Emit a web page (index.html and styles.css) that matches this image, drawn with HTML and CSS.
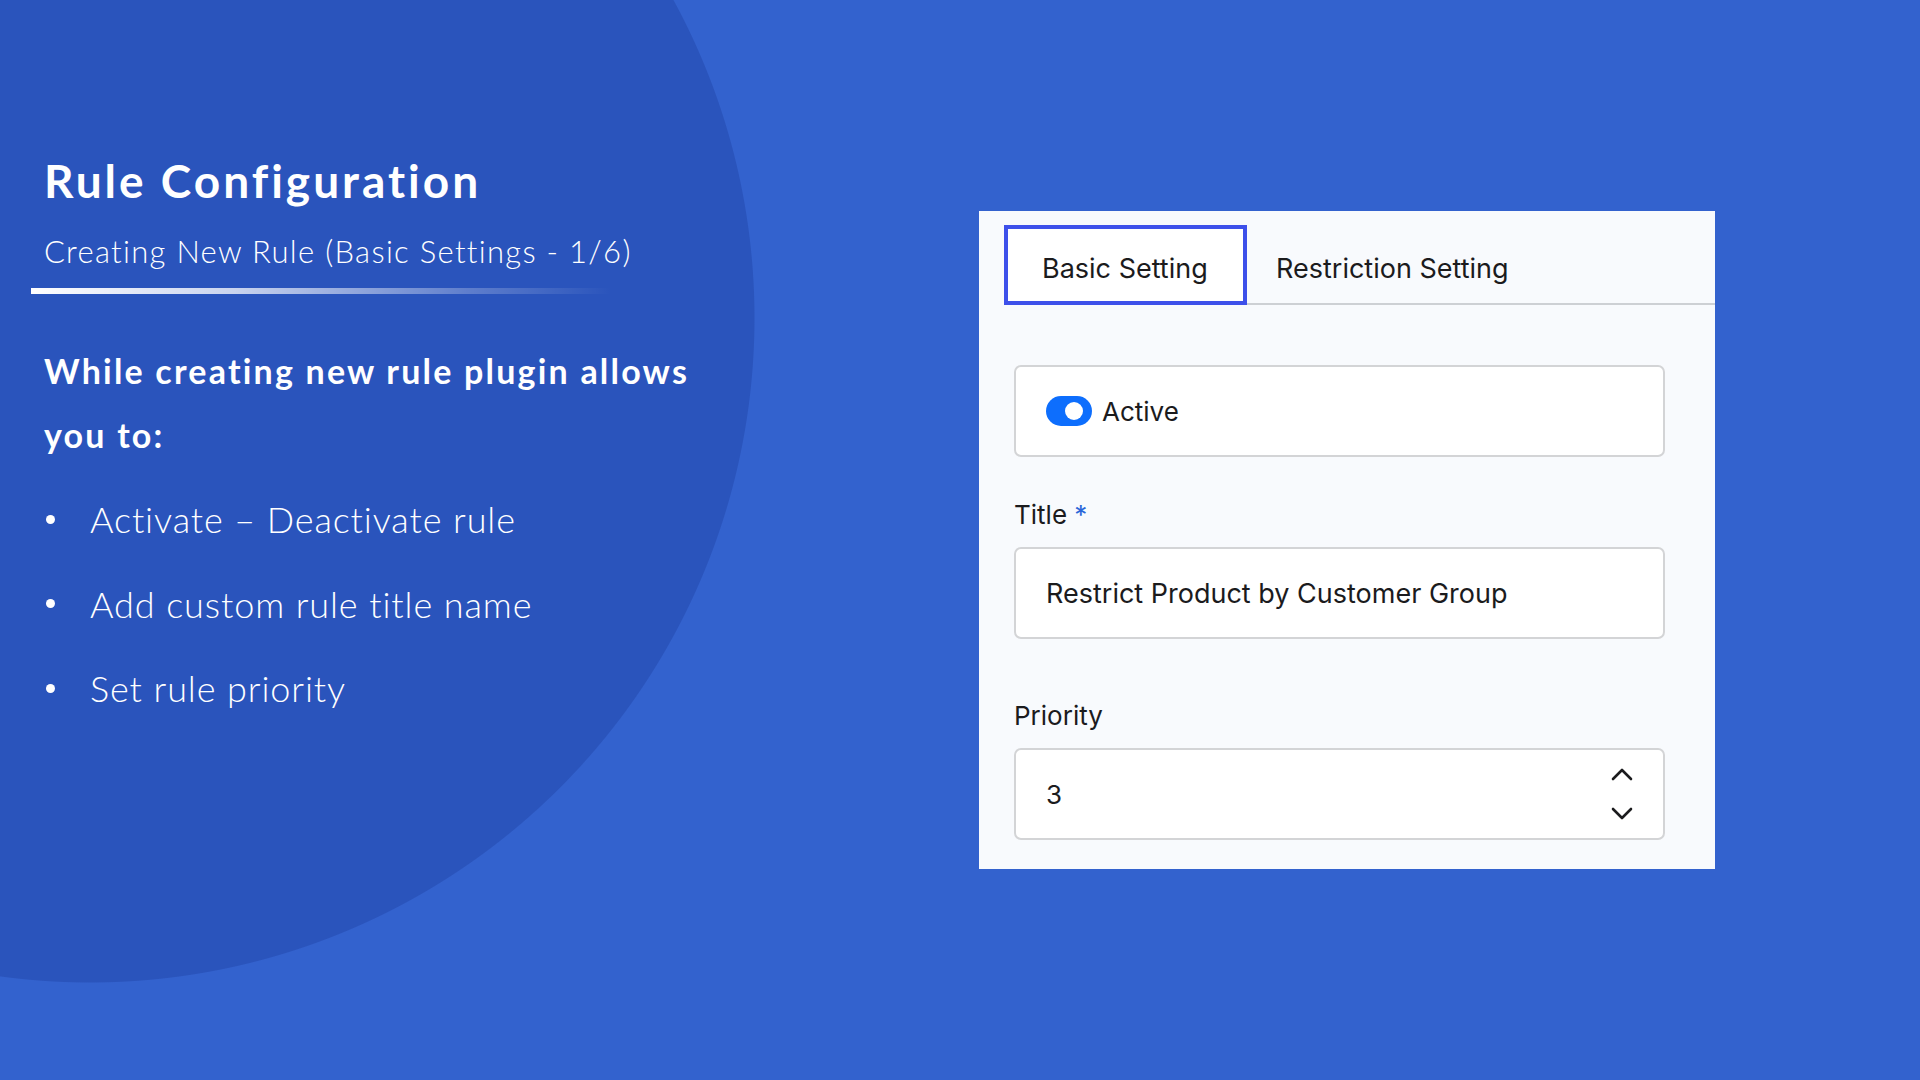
FILE: index.html
```html
<!DOCTYPE html>
<html lang="en">
<head>
<meta charset="utf-8">
<title>Rule Configuration</title>
<link rel="stylesheet" href="styles.css">
</head>
<body>
<main class="slide">
  <section class="intro">
    <h1 class="title">Rule Configuration</h1>
    <p class="subtitle">Creating New Rule (Basic Settings - 1/6)</p>
    <div class="rule-line"></div>
    <p class="lead">While creating new rule plugin allows you to:</p>
    <ul class="points">
      <li>Activate – Deactivate rule</li>
      <li>Add custom rule title name</li>
      <li>Set rule priority</li>
    </ul>
  </section>
  <section class="card">
    <div class="tabs">
      <div class="tab active">Basic Setting</div>
      <div class="tab">Restriction Setting</div>
    </div>
    <div class="form">
      <div class="field">
        <span class="switch"><span class="knob"></span></span>
        <span class="switch-label">Active</span>
      </div>
      <div class="label label-title">Title <span class="req">*</span></div>
      <div class="field field-text">Restrict Product by Customer Group</div>
      <div class="label label-priority">Priority</div>
      <div class="field number">
        <span>3</span>
        <svg class="spin" width="22" height="56" viewBox="0 0 22 56">
          <polyline points="2,13 11,4 20,13" />
          <polyline points="2,43 11,52 20,43" />
        </svg>
      </div>
    </div>
  </section>
</main>
</body>
</html>
```
FILE: styles.css
```css
html, body {
  margin: 0;
  padding: 0;
}
body {
  width: 1920px;
  height: 1080px;
  overflow: hidden;
  background: radial-gradient(circle 665px at 90px 318px, #2a54bc 99.85%, #3362ce 100%);
  font-family: "Lato", "Noto Sans", sans-serif;
}
.slide {
  display: grid;
  grid-template-columns: 979px 736px;
  height: 1080px;
}
.intro {
  padding: 153px 0 0 44px;
  color: #ffffff;
}
.title {
  margin: 0;
  font-size: 46px;
  line-height: 56px;
  font-weight: 700;
  letter-spacing: 3px;
}
.subtitle {
  margin: 22px 0 0;
  font-size: 31px;
  line-height: 40px;
  font-weight: 300;
  letter-spacing: 1.3px;
}
.rule-line {
  margin: 17px 0 0 -13px;
  width: 580px;
  height: 6px;
  background: linear-gradient(to right, #ffffff 0%, rgba(255,255,255,0.75) 35%, rgba(255,255,255,0.25) 75%, rgba(255,255,255,0) 100%);
}
.lead {
  margin: 45px 0 0;
  width: 690px;
  font-size: 34px;
  line-height: 64px;
  font-weight: 700;
  letter-spacing: 2.2px;
}
.points {
  list-style: none;
  margin: 10px 0 0;
  padding: 0;
}
.points li {
  display: flex;
  align-items: center;
  height: 84.5px;
  font-size: 36px;
  font-weight: 300;
  letter-spacing: 0.9px;
}
.points li::before {
  content: "";
  width: 9px;
  height: 9px;
  border-radius: 50%;
  background: #ffffff;
  margin: 0 35px 0 2px;
  flex: none;
}
.card {
  margin-top: 211px;
  height: 658px;
  box-sizing: border-box;
  background: #f8fafd;
  padding-top: 14px;
  font-family: "Inter", "Liberation Sans", sans-serif;
  color: #1b1b1d;
}
.tabs {
  display: flex;
  margin-left: 25px;
  border-bottom: 2px solid #cdd0d4;
}
.tab {
  height: 80px;
  box-sizing: border-box;
  margin-bottom: -2px;
  display: flex;
  align-items: center;
  padding: 6px 0 0 29px;
  font-size: 27px;
  border: 4px solid transparent;
  border-left: 0;
}
.tab.active {
  width: 243px;
  border: 4px solid #3d50ea;
  padding-left: 34px;
  background: #ffffff;
}
.form {
  padding: 60px 50px 0 35px;
}
.field {
  height: 92px;
  box-sizing: border-box;
  border: 2px solid #d3d4d6;
  border-radius: 7px;
  background: #ffffff;
  display: flex;
  align-items: center;
  padding: 0 30px;
  font-size: 26px;
}
.field-text {
  font-size: 27px;
}
.switch {
  width: 46px;
  height: 30px;
  border-radius: 15px;
  background: #0d6efd;
  display: flex;
  align-items: center;
  justify-content: flex-end;
  padding-right: 9px;
  box-sizing: border-box;
  margin-right: 10px;
}
.knob {
  width: 18px;
  height: 18px;
  border-radius: 50%;
  background: #ffffff;
}
.label {
  font-size: 26px;
  line-height: 32px;
}
.label-title {
  margin: 42px 0 16px;
}
.label-priority {
  margin: 61px 0 16px;
}
.req {
  color: #2a66d9;
}
.number {
  justify-content: space-between;
}
.spin {
  fill: none;
  stroke: #1b1b1d;
  stroke-width: 2.6;
  stroke-linecap: round;
  stroke-linejoin: round;
}
```
